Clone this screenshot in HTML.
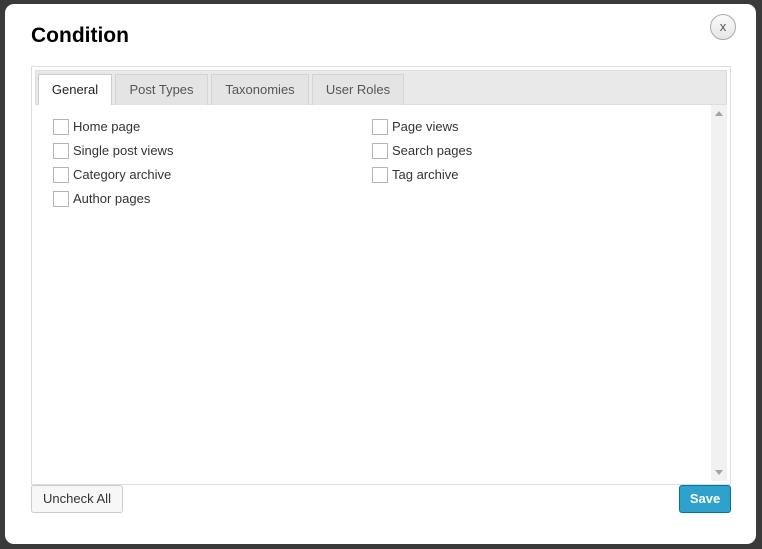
<!DOCTYPE html>
<html><head><style>
*{box-sizing:border-box;margin:0;padding:0}
body{width:762px;height:549px;background:#3a3a3a;font-family:"Liberation Sans",Arial,sans-serif;position:relative;overflow:hidden}
.dlg{position:absolute;left:5px;top:4px;width:751px;height:540px;background:#fff;border-radius:9px}
h1{position:absolute;left:31px;top:24px;font-size:21px;font-weight:bold;color:#000}
.x{position:absolute;left:710px;top:14px;width:26px;height:26px;border-radius:50%;border:1px solid #aaa;background:linear-gradient(#fafafa,#e6e6e6);font-size:13px;color:#555;text-align:center;line-height:23px}
.box{position:absolute;left:31px;top:66px;width:700px;height:419px;border:1px solid #ddd}
.bar{position:absolute;left:35px;top:70px;width:692px;height:35px;background:#e9e9e9;border:1px solid #ddd}
.tab{position:absolute;top:74px;height:31px;background:#e4e4e4;border:1px solid #d4d4d4;border-bottom:none;font-size:13px;color:#555;text-align:center;line-height:30px}
.tab.a{background:#fff;color:#222;border-color:#ccc;height:31px}
.sb{position:absolute;left:711px;top:105px;width:16px;height:376px;background:#f1f1f1}
.cb{position:absolute;font-size:13px;color:#333;line-height:16px}
.cb i{display:inline-block;width:16px;height:16px;border:1px solid #b4b4b4;vertical-align:top;margin-right:4px;background:#fff}
.btn{position:absolute;top:485px;height:28px;border-radius:3px;font-size:13px;text-align:center;line-height:26px}
</style></head><body>
<div class="dlg"></div>
<h1>Condition</h1>
<div class="x">x</div>
<div class="box"></div>
<div class="bar"></div>
<div class="tab a" style="left:38px;width:74px">General</div>
<div class="tab" style="left:115px;width:93px">Post Types</div>
<div class="tab" style="left:211px;width:98px">Taxonomies</div>
<div class="tab" style="left:312px;width:92px">User Roles</div>
<div class="sb"><div style="position:absolute;left:4px;top:6px;border:4px solid transparent;border-bottom:5px solid #a3a3a3;border-top:none"></div><div style="position:absolute;left:4px;bottom:6px;border:4px solid transparent;border-top:5px solid #a3a3a3;border-bottom:none"></div></div>
<div class="cb" style="left:53px;top:119px"><i></i>Home page</div>
<div class="cb" style="left:53px;top:143px"><i></i>Single post views</div>
<div class="cb" style="left:53px;top:167px"><i></i>Category archive</div>
<div class="cb" style="left:53px;top:191px"><i></i>Author pages</div>
<div class="cb" style="left:372px;top:119px"><i></i>Page views</div>
<div class="cb" style="left:372px;top:143px"><i></i>Search pages</div>
<div class="cb" style="left:372px;top:167px"><i></i>Tag archive</div>
<div class="btn" style="left:31px;width:92px;background:#f7f7f7;border:1px solid #ccc;color:#333">Uncheck All</div>
<div class="btn" style="left:679px;width:52px;background:#2ea2cc;border:1px solid #0074a2;color:#fff;font-weight:bold">Save</div>
</body></html>
